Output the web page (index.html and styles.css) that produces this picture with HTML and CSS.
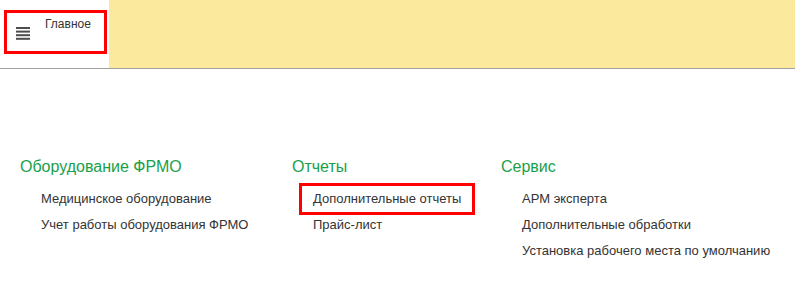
FILE: index.html
```html
<!DOCTYPE html>
<html lang="ru">
    <head>
        <meta charset="UTF-8">
        <title>Главное</title>
        <link rel="stylesheet" href="styles.css">
    </head>
    <body>
        <div class="header">
            <div class="sections">
                <div class="tile">
                    <svg class="tile-icon" width="14" height="13" viewBox="0 0 14 13">
                        <rect x="0" y="0" width="14" height="2" fill="#4d4d4d"/>
                        <rect x="0" y="3.6" width="14" height="2" fill="#4d4d4d"/>
                        <rect x="0" y="7.2" width="14" height="2" fill="#4d4d4d"/>
                        <rect x="0" y="10.8" width="14" height="2" fill="#4d4d4d"/>
                    </svg>
                    <span class="tile-text">Главное</span>
                </div>
            </div>
            <div class="panel"></div>
        </div>

        <div class="main">
            <div class="group group-equipment">
                <div class="group-title">Оборудование ФРМО</div>
                <div class="item">Медицинское оборудование</div>
                <div class="item">Учет работы оборудования ФРМО</div>
            </div>
            <div class="group group-reports">
                <div class="group-title">Отчеты</div>
                <div class="item current">Дополнительные отчеты</div>
                <div class="item">Прайс-лист</div>
            </div>
            <div class="group">
                <div class="group-title">Сервис</div>
                <div class="item">АРМ эксперта</div>
                <div class="item">Дополнительные обработки</div>
                <div class="item">Установка рабочего места по умолчанию</div>
            </div>
        </div>
    </body>
</html>
```

FILE: styles.css
```css
body {
    margin: 0;
    font-family: "Liberation Sans", Arial, sans-serif;
    color: #333;
    background-color: #fff;
}
.header {
    display: flex;
    height: 68px;
    border-bottom: 1px solid #a0a0a0;
}
.sections {
    width: 109px;
    background-color: #fff;
}
.panel {
    flex: 1;
    background-color: #fbe99d;
}
.tile {
    display: flex;
    box-sizing: border-box;
    width: 103px;
    height: 44px;
    margin: 10px 0 0 4px;
    padding: 4px 0 0 9px;
    border: 3px solid #ff0000;
}
.tile-icon {
    margin-top: 10px;
    margin-right: 15px;
}
.tile-text {
    font-size: 12px;
    line-height: 15px;
}
.main {
    display: flex;
    margin-top: 89px;
    padding-left: 20px;
}
.group {
    flex-shrink: 0;
}
.group-equipment {
    width: 272px;
}
.group-reports {
    width: 209px;
}
.group-title {
    font-size: 16px;
    line-height: 18px;
    color: #1a9f4a;
    margin-bottom: 10px;
}
.item {
    display: table;
    font-size: 13px;
    line-height: 26px;
    margin-left: 10px;
    padding: 0 11px;
    white-space: nowrap;
}
.current {
    outline: 3px solid #ff0000;
}
```
